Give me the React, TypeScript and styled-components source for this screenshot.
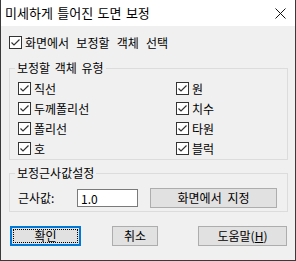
import React from 'react';
import styled, { createGlobalStyle } from 'styled-components';

const GlobalStyle = createGlobalStyle`
	html, body {
		margin: 0;
		padding: 0;
		background: #ffffff;
	}
	body {
		font-family: 'Noto Sans CJK KR', 'Noto Sans', sans-serif;
		color: #000000;
	}
`;

const SHAPES = [
	['직선', '원'],
	['두께폴리선', '치수'],
	['폴리선', '타원'],
	['호', '블럭'],
];

function Check() {
	return (
		<CheckBox>
			<svg width="11" height="11" viewBox="0 0 11 11">
				<polyline points="1.5,5.5 4,8 9.5,2.5" fill="none" stroke="#333" strokeWidth="1.2" />
			</svg>
		</CheckBox>
	);
}

function CheckItem({ label, $ws = 3 }: { label: string; $ws?: number }) {
	return (
		<CheckRow $ws={$ws}>
			<Check />
			<span>{label}</span>
		</CheckRow>
	);
}

export default function App() {
	return (
		<>
			<GlobalStyle />
			<Window>
				<TitleBar>
					<Title>미세하게 틀어진 도면 보정</Title>
					<svg width="11" height="11" viewBox="0 0 11 11">
						<path d="M0.5 0.5 L10.5 10.5 M10.5 0.5 L0.5 10.5" stroke="#111" strokeWidth="1" />
					</svg>
				</TitleBar>
				<Body>
					<CheckItem label="화면에서 보정할 객체 선택" $ws={4.5} />

					<Group $mt={12} $pb={4}>
						<Legend>보정할 객체 유형</Legend>
						<ShapeGrid>
							{SHAPES.map(([left, right]) => (
								<React.Fragment key={left}>
									<CheckItem label={left} />
									<CheckItem label={right} />
								</React.Fragment>
							))}
						</ShapeGrid>
					</Group>

					<Group $mt={6} $pb={3}>
						<Legend>보정근사값설정</Legend>
						<ValueRow>
							<ValueLabel>근사값:</ValueLabel>
							<ValueInput defaultValue="1.0" />
							<Button $w={127} $ml={12}>화면에서 지정</Button>
						</ValueRow>
					</Group>

					<ButtonRow>
						<DefaultButton>
							<FocusRing>확인</FocusRing>
						</DefaultButton>
						<Button $w={46} $ml={31}>취소</Button>
						<Button $w={89} $ml={40}>
							도움말(<u>H</u>)
						</Button>
					</ButtonRow>
				</Body>
			</Window>
		</>
	);
}

const Window = styled.div`
	width: 296px;
	height: 261px;
	box-sizing: border-box;
	border: 1px solid #3a3a3a;
	border-top: none;
	display: flex;
	flex-direction: column;
	font-size: 12px;
`;

const TitleBar = styled.div`
	flex: none;
	height: 26px;
	background: #ffffff;
	display: flex;
	align-items: center;
	justify-content: space-between;
	padding: 0 9px 0 4px;
`;

const Title = styled.span`
	font-size: 13px;
	line-height: 26px;
	word-spacing: 1.5px;
	white-space: nowrap;
`;

const Body = styled.div`
	flex: 1;
	background: #f0f0f0;
	padding: 10px 7px 0 8px;
	display: flex;
	flex-direction: column;
`;

const CheckRow = styled.label<{ $ws: number }>`
	display: flex;
	align-items: center;
	gap: 3px;
	height: 13px;
	line-height: 13px;
	white-space: nowrap;
	word-spacing: ${({ $ws }) => $ws}px;
`;

const CheckBox = styled.span`
	flex: none;
	display: flex;
	align-items: center;
	justify-content: center;
	width: 13px;
	height: 13px;
	box-sizing: border-box;
	border: 1px solid #333333;
	background: #ffffff;
`;

const Group = styled.fieldset<{ $mt: number; $pb: number }>`
	margin: ${({ $mt }) => $mt}px 0 0 0;
	padding: 0 0 ${({ $pb }) => $pb}px 0;
	border: 1px solid #dcdcdc;
	min-width: 0;
`;

const Legend = styled.legend`
	margin-left: 5px;
	padding: 0 2px;
	font-size: 12px;
	line-height: 14px;
	word-spacing: 2px;
`;

const ShapeGrid = styled.div`
	display: grid;
	grid-template-columns: 158px 1fr;
	row-gap: 7px;
	padding: 7px 8px 0 8px;
`;

const ValueRow = styled.div`
	display: flex;
	align-items: center;
	height: 20px;
	padding: 8px 9px 0 8px;
`;

const ValueLabel = styled.span`
	width: 59px;
	line-height: 18px;
`;

const ValueInput = styled.input`
	width: 61px;
	height: 18px;
	box-sizing: border-box;
	margin: 0;
	padding: 0 3px;
	border: 1px solid #7a7a7a;
	background: #ffffff;
	font-family: inherit;
	font-size: 12px;
	color: #000000;
	outline: none;
`;

const Button = styled.button<{ $w: number; $ml?: number }>`
	width: ${({ $w }) => $w}px;
	height: 20px;
	margin: 0 0 0 ${({ $ml }) => $ml ?? 0}px;
	padding: 0;
	box-sizing: border-box;
	border: 1px solid #adadad;
	background: #e1e1e1;
	font-family: inherit;
	font-size: 12px;
	line-height: 18px;
	color: #000000;
	word-spacing: 3px;
	white-space: nowrap;

	u {
		text-underline-offset: 1px;
	}
`;

const DefaultButton = styled.button`
	display: flex;
	width: 71px;
	height: 20px;
	margin: 0;
	padding: 1px;
	box-sizing: border-box;
	border: 2px solid #0078d7;
	background: #e1e1e1;
	font-family: inherit;
	font-size: 12px;
	color: #000000;
`;

const FocusRing = styled.span`
	flex: 1;
	display: flex;
	align-items: center;
	justify-content: center;
	border: 1px dotted #000000;
	line-height: 12px;
`;

const ButtonRow = styled.div`
	display: flex;
	margin: 14px 0 0 1px;
`;
